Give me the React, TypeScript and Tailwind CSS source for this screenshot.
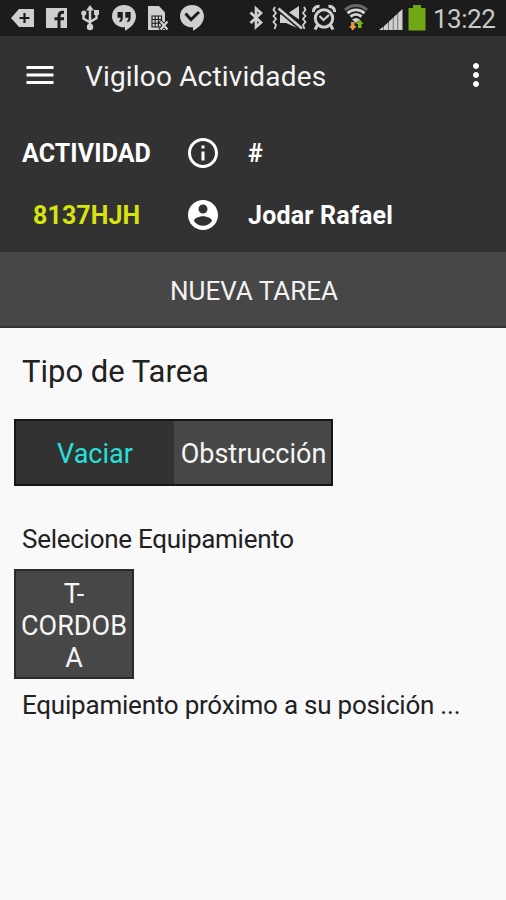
import type { ReactNode } from "react";
import { MdInfoOutline, MdMenu, MdMoreVert } from "react-icons/md";

const taskTypes = [
  { id: "vaciar", label: "Vaciar" },
  { id: "obstruccion", label: "Obstrucción" },
];

function StatusIcon({ width, className, children }: { width: number; className?: string; children: ReactNode }) {
  return (
    <svg width={width} height={36} viewBox={`0 0 ${width} 36`} className={`shrink-0 ${className ?? ""}`} fill="#cfcfcf">
      {children}
    </svg>
  );
}

function AccountIcon({ className }: { className?: string }) {
  return (
    <svg viewBox="0 0 24 24" fill="currentColor" className={className}>
      <path d="M12 2C6.48 2 2 6.48 2 12s4.48 10 10 10 10-4.48 10-10S17.52 2 12 2zm0 3c1.66 0 3 1.34 3 3s-1.34 3-3 3-3-1.34-3-3 1.34-3 3-3zm0 14.200c-2.500 0-4.710-1.280-6-3.220.030-1.990 4-3.080 6-3.080 1.990 0 5.970 1.090 6 3.080-1.290 1.940-3.500 3.220-6 3.220z" />
    </svg>
  );
}

function StatusBar() {
  return (
    <div className="flex h-9 items-center bg-[#1c1c1c] pl-[11px]">
      <StatusIcon width={23}>
        <path d="M8 9h15v18H8L0 18z" />
        <path d="M8.5 18h10M13.5 13v10" stroke="#1c1c1c" strokeWidth="2.2" />
      </StatusIcon>
      <StatusIcon width={21} className="ml-3">
        <path d="M0 8h21v20H0z" />
        <path d="M13 28.500V16.200c0-2.800 1-4 3.300-4H18M8.500 18.700H18" fill="none" stroke="#1c1c1c" strokeWidth="3" />
      </StatusIcon>
      <StatusIcon width={18} className="ml-[14px]">
        <path d="M9 5l4 5.500H5z" />
        <circle cx="9" cy="27" r="3.200" />
        <path d="M9 8v19M2.500 14v4.500l6.500 4M15.500 12v6l-6.500 4" fill="none" stroke="#cfcfcf" strokeWidth="2.500" />
        <circle cx="2.800" cy="13" r="2.600" />
        <path d="M13 10h5v5h-5z" />
      </StatusIcon>
      <StatusIcon width={24} className="ml-[13px]">
        <path d="M12 5c6.600 0 12 4.800 12 11.200 0 6.300-5 11.300-11 14.600v-3.500C5.600 27.600 0 22.600 0 16.200 0 9.800 5.400 5 12 5z" />
        <path d="M5.500 12h5.300v6.200c0 2.200-1.200 3.600-3.300 4.200v-2.200c.8-.5 1.200-1.100 1.200-2.400H5.500zM13.300 12h5.300v6.200c0 2.200-1.200 3.600-3.300 4.200v-2.200c.8-.5 1.200-1.100 1.200-2.400h-3.200z" fill="#1c1c1c" />
      </StatusIcon>
      <StatusIcon width={22} className="ml-3">
        <path d="M0 6h11l6 6.500V30H0z" />
        <path d="M4 16h9.500v11H4zM4 19.500h9.500M4 23.200h9.500M7.200 16v11M10.400 16v11" fill="none" stroke="#1c1c1c" strokeWidth="1.100" />
        <path d="M12 21l8 9M20 21l-8 9" stroke="#1c1c1c" strokeWidth="4" />
        <path d="M12.500 21.500l7 8M19.500 21.500l-7 8" stroke="#cfcfcf" strokeWidth="2.200" />
      </StatusIcon>
      <StatusIcon width={24} className="ml-[10px]">
        <path d="M12 5c6.600 0 12 4.800 12 11.200 0 6.300-5 11.300-11 14.600v-3.500C5.600 27.600 0 22.600 0 16.200 0 9.800 5.400 5 12 5z" />
        <path d="M5.500 13.500l5.500 6 8-7.500" fill="none" stroke="#1c1c1c" strokeWidth="3" />
      </StatusIcon>

      <StatusIcon width={15} className="ml-[45px]">
        <path d="M1.500 12.500l10.500 10-5 4.500V8.500l5 4.500-10.500 10" fill="none" stroke="#cfcfcf" strokeWidth="2.700" />
      </StatusIcon>
      <StatusIcon width={35} className="ml-2">
        <path d="M3 7l-1.500 3 2.500 3-2.500 3 2.500 3-2.500 3 2.500 3-1.500 4M32 7l1.500 3-2.500 3 2.500 3-2.500 3 2.500 3-2.500 3 1.500 4" fill="none" stroke="#cfcfcf" strokeWidth="1.800" />
        <path d="M8 14.500h3L25.500 27.500H24L14 23H8z" />
        <path d="M17 12.500L27 6v13.500z" />
        <path d="M6.500 8.500l23.500 20" stroke="#cfcfcf" strokeWidth="2.600" />
        <path d="M9 13.500L26.500 28.500" stroke="#1c1c1c" strokeWidth="1.200" />
      </StatusIcon>
      <StatusIcon width={24} className="ml-[5px]">
        <circle cx="12" cy="18.500" r="8.700" fill="none" stroke="#cfcfcf" strokeWidth="3" />
        <path d="M1.500 12a5 5 0 0 1 6-5.500M16.500 6.500a5 5 0 0 1 6 5.500M5.500 25L3 29.500M18.500 25l2.500 4.500" fill="none" stroke="#cfcfcf" strokeWidth="3" />
        <path d="M7.500 16l4 4 5.500-5" fill="none" stroke="#cfcfcf" strokeWidth="2.300" />
      </StatusIcon>
      <StatusIcon width={24} className="ml-[8px]">
        <path d="M1 10a16 16 0 0 1 22 0" fill="none" stroke="#686868" strokeWidth="3" />
        <path d="M3.500 13.200a12.500 12.500 0 0 1 17 0M6.500 16.600a8 8 0 0 1 11 0" fill="none" stroke="#d4d4d4" strokeWidth="2.900" />
        <path d="M8 19.500q4-3 8 0L12 23z" />
        <path d="M7 22h3.600v4h2L8.800 30.500 5 26h2z" fill="#e8963c" />
        <path d="M14 28h3.600v-4h2l-3.800-4.500L12 24h2z" fill="#77b51c" />
      </StatusIcon>
      <StatusIcon width={24} className="ml-[11px]">
        <path d="M0 30l4.500-3.600V30zM5 26l4.200-3.600V30H5zM9.700 21.700l4.200-3.600V30H9.700zM14.400 17.400l4.200-3.800V30h-4.200zM19.100 12.900L23.500 9v21h-4.400z" />
      </StatusIcon>
      <StatusIcon width={18} className="ml-[5px]">
        <path d="M5 5h8v3h4.500v22.500H.5V8H5z" fill="#70a816" />
      </StatusIcon>
      <span className="ml-[7px] pt-[2px] text-[26px] leading-9 tracking-[-0.5px] text-[#c9c9c9]">13:22</span>
    </div>
  );
}

export default function App() {
  const selected = "vaciar";

  return (
    <div className="flex h-[900px] w-[506px] flex-col overflow-hidden bg-[#f9f9f9] font-['Roboto',sans-serif] text-[#212121]">
      <StatusBar />

      <header className="h-[216px] bg-[#323232] text-white">
        <div className="flex h-[78px] items-center">
          <MdMenu className="ml-[22px] size-9" />
          <h1 className="ml-[27px] pt-[3px] text-[28px] leading-9 tracking-[0.16px] text-[#f5f5f5]">
            Vigiloo Actividades
          </h1>
          <MdMoreVert className="mr-[12px] ml-auto size-9" />
        </div>
        <div className="grid grid-cols-[172px_62px_1fr] grid-rows-[62px_62px] items-center pt-[8px] text-[25px] font-bold">
          <span className="pt-[2px] pl-[22px] tracking-[0.1px]">ACTIVIDAD</span>
          <MdInfoOutline className="mx-auto size-9" />
          <span className="pt-[2px] pl-[14px]">#</span>
          <span className="pt-[2px] pl-[33px] tracking-[0.1px] text-[#d7e310]">8137HJH</span>
          <AccountIcon className="mx-auto size-9" />
          <span className="pt-[2px] pl-[14px] tracking-[0.2px]">Jodar Rafael</span>
        </div>
      </header>

      <div className="flex h-[76px] items-center justify-center border-b-2 border-[#323232] bg-[#474747] pt-[4px] pl-[2px] text-[26px] text-[#f2f2f2]">
        NUEVA TAREA
      </div>

      <main className="flex flex-col">
        <h2 className="mt-[25px] ml-[22px] text-[31px] leading-[38px]">Tipo de Tarea</h2>
        <div className="mt-[28px] ml-[14px] flex h-[67px] w-[319px] border-2 border-[#161616] text-[27px]">
          {taskTypes.map((type) => (
            <button
              key={type.id}
              className={
                type.id === selected
                  ? "h-full w-[158px] bg-[#323232] pt-[4px] text-[#27e0dc]"
                  : "h-full flex-1 bg-[#474747] pt-[4px] pl-[2px] text-[#f5f5f5]"
              }
            >
              {type.label}
            </button>
          ))}
        </div>

        <p className="mt-[37px] ml-[22px] text-[26px] leading-8 tracking-[-0.27px]">Selecione Equipamiento</p>
        <button className="mt-[14px] ml-[14px] h-[110px] w-[120px] border-2 border-[#2a2a2a] bg-[#474747] pt-[3px] text-[27px] leading-8 text-[#f5f5f5]">
          T-
          <br />
          CORDOB
          <br />A
        </button>
        <p className="mt-[10px] ml-[22px] text-[26px] leading-8 tracking-[-0.22px]">
          Equipamiento próximo a su posición ...
        </p>
      </main>
    </div>
  );
}
